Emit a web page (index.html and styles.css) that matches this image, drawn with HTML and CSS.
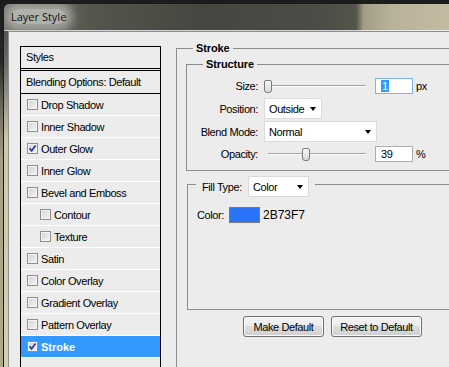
FILE: index.html
```html
<!DOCTYPE html>
<html>
<head>
<meta charset="utf-8">
<title>Layer Style</title>
<link rel="stylesheet" href="styles.css">
</head>
<body>
<div class="window">
  <div class="titlebar"><span class="title-text">Layer Style</span></div>
  <div class="frame">
    <div class="client">
      <div class="styles-list">
        <div class="list-head">Styles</div>
        <div class="list-blend">Blending Options: Default</div>
        <div class="list-item"><span class="cb"></span>Drop Shadow</div>
        <div class="list-item"><span class="cb"></span>Inner Shadow</div>
        <div class="list-item"><span class="cb"><svg viewBox="0 0 9 9" width="9" height="9"><path d="M1.5 4.3 L3.6 6.8 L7.6 1.6" fill="none" stroke="#2c3a8c" stroke-width="1.7"/></svg></span>Outer Glow</div>
        <div class="list-item"><span class="cb"></span>Inner Glow</div>
        <div class="list-item"><span class="cb"></span>Bevel and Emboss</div>
        <div class="list-item sub"><span class="cb"></span>Contour</div>
        <div class="list-item sub"><span class="cb"></span>Texture</div>
        <div class="list-item"><span class="cb"></span>Satin</div>
        <div class="list-item"><span class="cb"></span>Color Overlay</div>
        <div class="list-item"><span class="cb"></span>Gradient Overlay</div>
        <div class="list-item"><span class="cb"></span>Pattern Overlay</div>
        <div class="list-item selected"><span class="cb"><svg viewBox="0 0 9 9" width="9" height="9"><path d="M1.5 4.3 L3.6 6.8 L7.6 1.6" fill="none" stroke="#2c3a8c" stroke-width="1.7"/></svg></span>Stroke</div>
      </div>

      <div class="panel">
        <div class="group outer">
          <div class="group-title bold">Stroke</div>

          <div class="group structure">
            <div class="group-title bold">Structure</div>

            <div class="field row-size">
              <span class="lbl">Size:</span>
              <div class="ctl">
                <div class="slider"><span class="thumb"></span></div>
                <span class="num focus"><span class="sel">1</span></span>
                <span class="unit">px</span>
              </div>
            </div>

            <div class="field row-position">
              <span class="lbl">Position:</span>
              <div class="ctl">
                <div class="select w-position"><span>Outside</span><span class="arrow"></span></div>
              </div>
            </div>

            <div class="field row-blend">
              <span class="lbl">Blend Mode:</span>
              <div class="ctl">
                <div class="select w-blend"><span>Normal</span><span class="arrow"></span></div>
              </div>
            </div>

            <div class="field row-opacity">
              <span class="lbl">Opacity:</span>
              <div class="ctl">
                <div class="slider"><span class="thumb thumb-opacity"></span></div>
                <span class="num">39</span>
                <span class="unit">%</span>
              </div>
            </div>
          </div>

          <div class="group fill">
            <div class="group-title fill-title">
              <span class="fill-label">Fill Type:</span>
              <div class="select w-fill"><span>Color</span><span class="arrow"></span></div>
            </div>
            <div class="color-row">
              <span class="color-label">Color:</span>
              <span class="swatch"></span>
              <span class="hex">2B73F7</span>
            </div>
          </div>

          <div class="buttons">
            <button class="btn btn-make">Make Default</button>
            <button class="btn btn-reset">Reset to Default</button>
          </div>
        </div>
      </div>
    </div>
  </div>
</div>
</body>
</html>
```

FILE: styles.css
```css
* { box-sizing: border-box; }
html, body { margin: 0; padding: 0; }
body {
  width: 449px;
  height: 367px;
  overflow: hidden;
  background: linear-gradient(to bottom, #1c1c1c 0, #262626 60px, #6f6c62 110px, #a59f89 160px, #b0a992 100%);
  font: 11px "Liberation Sans", Arial, sans-serif;
  letter-spacing: -0.4px;
  color: #000;
}

.window {
  margin: 3px 0 0 3px;
  width: 446px;
  height: 364px;
  border: 1px solid #1a1a1a;
  border-right: none;
  border-bottom: none;
  border-radius: 6px 0 0 0;
  overflow: hidden;
  display: flex;
  flex-direction: column;
}

.titlebar {
  flex: none;
  height: 27px;
  border-bottom: 1px solid rgba(255,255,255,0.75);
  padding: 5px 0 0 7px;
  background: linear-gradient(to right, #6f6f68 0, #55554e 90px, #45463f 200px, #4c4d46 320px, #55554d 352px, #a49e89 360px, #bab39b 390px, #c3bca3 449px);
}
.title-text {
  display: inline-block;
  height: 15px;
  line-height: 15px;
  font-family: "Open Sans", sans-serif;
  font-size: 11px;
  letter-spacing: 0;
  color: #111;
  background: rgba(190,190,184,0.85);
  border-radius: 8px;
  box-shadow: 0 0 10px 7px rgba(180,180,174,0.8);
}

.frame {
  flex: 1;
  display: flex;
  padding-left: 4px;
  background: linear-gradient(to bottom, #55554f 0, #6e6d66 35px, #a9a592 80px, #d0c8ab 110px, #d6ceb1 100%);
}

.client {
  flex: 1;
  display: flex;
  gap: 15px;
  padding: 14px 0 0 11px;
  background: #ececec;
  border-top: 1px solid #8e8e8e;
  border-left: 1px solid #8e8e8e;
  position: relative;
}

/* ---------- styles list ---------- */
.styles-list {
  flex: none;
  width: 141px;
  border: 1px solid #000;
  border-bottom: none;
}
.list-head {
  height: 24px;
  line-height: 21px;
  padding-left: 5px;
  border-bottom: 3px double #000;
}
.list-blend {
  height: 23px;
  line-height: 22px;
  padding-left: 5px;
  border-bottom: 1px solid #000;
}
.list-item {
  height: 22px;
  display: flex;
  align-items: center;
  gap: 3px;
  padding-left: 6px;
  border-bottom: 1px solid #fff;
}
.list-item.sub { padding-left: 19px; }
.list-item.selected {
  background: #3399ff;
  color: #fff;
  font-weight: bold;
  letter-spacing: 0;
}
.cb {
  flex: none;
  width: 11px;
  height: 11px;
  border: 1px solid #8e8f8f;
  background: linear-gradient(135deg, #d0d2d6 0, #f6f6f6 100%);
  box-shadow: inset 0 0 0 1px #f3f3f3;
  display: flex;
  align-items: center;
  justify-content: center;
}

/* ---------- right panel ---------- */
.panel {
  flex: 1;
  min-width: 0;
  margin-top: 2px;
  display: flex;
  flex-direction: column;
}
.group {
  border: 1px solid #8d8d8d;
  border-right: none;
}
.outer {
  flex: 1;
  border-bottom: none;
}
.group-title {
  width: fit-content;
  margin: -7px 0 0 16px;
  padding: 0 3px;
  line-height: 13px;
  background: #ececec;
}
.bold { font-weight: bold; letter-spacing: -0.1px; }

.structure {
  margin: 9px 0 0 9px;
  padding-bottom: 8px;
}
.field {
  display: grid;
  grid-template-columns: 71px auto;
  column-gap: 6px;
  align-items: center;
}
.lbl { text-align: right; }
.ctl { display: flex; align-items: center; }
.row-size { margin-top: 7px; height: 16px; }
.row-position { margin-top: 4px; height: 21px; }
.row-blend { margin-top: 2px; height: 21px; }
.row-opacity { margin-top: 4px; height: 16px; }

.slider {
  width: 102px;
  height: 13px;
  display: flex;
  background:
    linear-gradient(#a2a2a2, #a2a2a2) 4px 5px / 98px 1px no-repeat,
    linear-gradient(#ffffff, #ffffff) 4px 6px / 98px 1px no-repeat;
}
.thumb {
  width: 8px;
  height: 13px;
  border: 1px solid #7b7b7b;
  border-radius: 2px 2px 3px 3px;
  background: linear-gradient(#f7f7f7, #d8d8d8);
}
.thumb-opacity { margin-left: 38px; }

.num {
  width: 38px;
  height: 16px;
  margin-left: 9px;
  border: 1px solid #abadb3;
  background: #fff;
  padding-left: 5px;
  line-height: 14px;
}
.num.focus { border-color: #7eb4ea; }
.sel { background: #3399ff; color: #fff; padding: 0 1px; }
.unit { margin-left: 3px; }

.select {
  height: 21px;
  display: flex;
  align-items: center;
  justify-content: space-between;
  background: #fff;
  border: 1px solid #dadada;
  padding: 0 5px 0 4px;
}
.w-position { width: 58px; }
.w-blend { width: 113px; }
.w-fill { width: 61px; }
.arrow {
  width: 0;
  height: 0;
  border-left: 3.5px solid transparent;
  border-right: 3.5px solid transparent;
  border-top: 4px solid #000;
}

.fill {
  margin: 13px 0 0 10px;
  height: 126px;
}
.fill-title {
  display: flex;
  align-items: center;
  margin: -9px 0 0 8px;
  padding: 0 6px;
  line-height: normal;
}
.fill-label { width: 46px; }
.color-row {
  display: flex;
  align-items: center;
  height: 16px;
  margin-top: 10px;
  padding-left: 9px;
}
.color-label { width: 32px; }
.swatch {
  width: 31px;
  height: 16px;
  border: 1px solid #7a7a7a;
  background: #2b73f7;
}
.hex {
  margin-left: 3px;
  font-size: 12px;
  letter-spacing: 0;
}

.buttons {
  display: flex;
  gap: 7px;
  margin: 6px 0 0 66px;
}
.btn {
  height: 21px;
  padding: 0;
  font: inherit;
  letter-spacing: inherit;
  color: #000;
  border: 1px solid #707070;
  border-radius: 3px;
  background: linear-gradient(#f2f2f2 0, #ebebeb 50%, #dddddd 50%, #cfcfcf 100%);
  box-shadow: inset 0 0 0 1px #fbfbfb;
}
.btn-make { width: 81px; }
.btn-reset { width: 91px; }
```
